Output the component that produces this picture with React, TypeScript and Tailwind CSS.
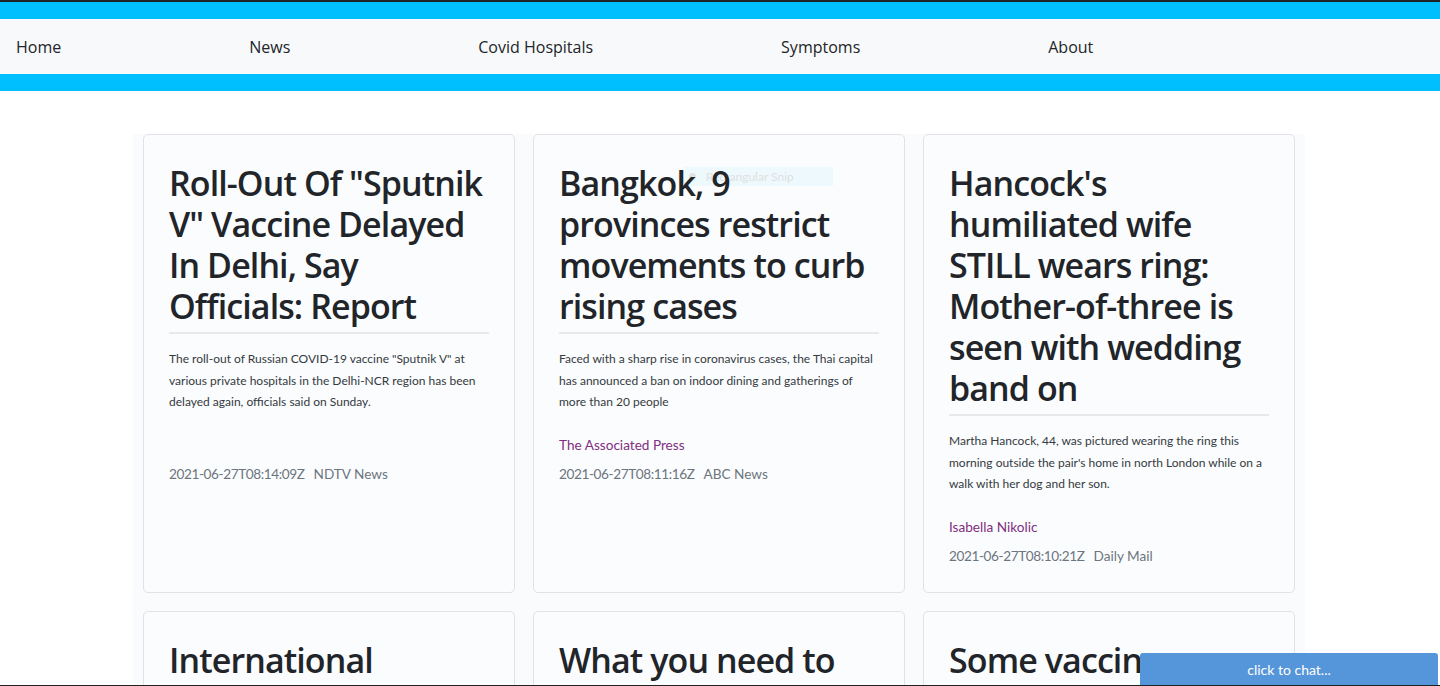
import React from 'react'

type Article = {
  title: string[]
  desc: string[]
  author: string
  date: string
  source: string
}

const articles: Article[] = [
  {
    title: ['Roll-Out Of "Sputnik', 'V" Vaccine Delayed', 'In Delhi, Say', 'Officials: Report'],
    desc: [
      'The roll-out of Russian COVID-19 vaccine "Sputnik V" at',
      'various private hospitals in the Delhi-NCR region has been',
      'delayed again, officials said on Sunday.',
    ],
    author: '',
    date: '2021-06-27T08:14:09Z',
    source: 'NDTV News',
  },
  {
    title: ['Bangkok, 9', 'provinces restrict', 'movements to curb', 'rising cases'],
    desc: [
      'Faced with a sharp rise in coronavirus cases, the Thai capital',
      'has announced a ban on indoor dining and gatherings of',
      'more than 20 people',
    ],
    author: 'The Associated Press',
    date: '2021-06-27T08:11:16Z',
    source: 'ABC News',
  },
  {
    title: ["Hancock's", 'humiliated wife', 'STILL wears ring:', 'Mother-of-three is', 'seen with wedding', 'band on'],
    desc: [
      'Martha Hancock, 44, was pictured wearing the ring this',
      "morning outside the pair's home in north London while on a",
      'walk with her dog and her son.',
    ],
    author: 'Isabella Nikolic',
    date: '2021-06-27T08:10:21Z',
    source: 'Daily Mail',
  },
  {
    title: ['International', 'travel rules'],
    desc: ['Travel restrictions remain in place across', 'many countries this summer.'],
    author: '',
    date: '2021-06-27T08:05:00Z',
    source: 'BBC News',
  },
  {
    title: ['What you need to', 'know today'],
    desc: ['The latest on the pandemic and', 'vaccine rollout around the world.'],
    author: '',
    date: '2021-06-27T08:02:00Z',
    source: 'CNN',
  },
  {
    title: ['Some vaccin', 'makers expand'],
    desc: ['Manufacturers are ramping up', 'production for the coming months.'],
    author: '',
    date: '2021-06-27T08:00:00Z',
    source: 'Reuters',
  },
]

const navItems = ['Home', 'News', 'Covid Hospitals', 'Symptoms', 'About']

function Card({ a, snip }: { a: Article; snip?: boolean }) {
  return (
    <div className="relative flex flex-col rounded-[5px] border border-[#dfe2e6] bg-[#fbfcfe] px-[25px] pt-[28px] pb-[25px]">
      {snip && (
        <div className="pointer-events-none absolute left-[150px] top-[32px] flex h-[19px] w-[149px] items-center gap-[10px] bg-[#eef9fe] pl-[5px] font-['Lato',sans-serif] text-[12px] text-[#e0e0e0]">
          <span className="h-[7px] w-[7px] rounded-full bg-[#e2e2e2]" />
          <span>Rectangular Snip</span>
        </div>
      )}
      <h2 className="relative whitespace-nowrap text-[34px] font-semibold leading-[41px] tracking-[-0.9px] text-[#212529]">
        {a.title.map((l, i) => (
          <div key={i}>{l}</div>
        ))}
      </h2>
      <div className="mt-[5px] border-t-2 border-[#e6e8eb]" />
      <div className="font-['Lato',sans-serif]">
        <p className="mt-[14px] whitespace-nowrap text-[12px] leading-[21.5px] text-[#343a40]">
          {a.desc.map((l, i) => (
            <span key={i} className="block">{l}</span>
          ))}
        </p>
        <div className="mt-[21px] h-[22px] text-[13.6px] leading-[22px] text-[#7f2f80]">{a.author}</div>
        <div className="mt-[7px] flex gap-[9px] text-[13.6px] leading-[22px] text-[#6c757d]">
          <span className="tracking-[-0.4px]">{a.date}</span>
          <span>{a.source}</span>
        </div>
      </div>
    </div>
  )
}

export default function App() {
  return (
    <div className="min-h-screen bg-white font-['Open_Sans','Noto_Sans',sans-serif]">
      <div className="h-[2px] bg-[#202124]" />
      <div className="h-[17px] bg-[#00bfff]" />
      <nav className="flex h-[55px] items-center gap-[188px] bg-[#f8f9fa] pl-[16px] text-[16px] text-[#212529]">
        {navItems.map((n) => (
          <a key={n} href="#" className="leading-none">{n}</a>
        ))}
      </nav>
      <div className="h-[17px] bg-[#00bfff]" />

      <main className="ml-[133px] mt-[43px] w-[1172px] bg-[#fafbfc] px-[10px] pb-[20px]">
        <div className="grid grid-cols-3 gap-[18px]">
          {articles.map((a, i) => (
            <Card key={i} a={a} snip={i === 1} />
          ))}
        </div>
      </main>

      <button className="fixed bottom-0 right-[2px] h-[33px] w-[298px] rounded-t-[3px] bg-[#5595da] pb-[1px] font-['Lato',sans-serif] text-[14px] text-white">
        click to chat...
      </button>
      <div className="fixed bottom-0 left-0 right-0 h-[1px] bg-[#202124]" />
    </div>
  )
}
